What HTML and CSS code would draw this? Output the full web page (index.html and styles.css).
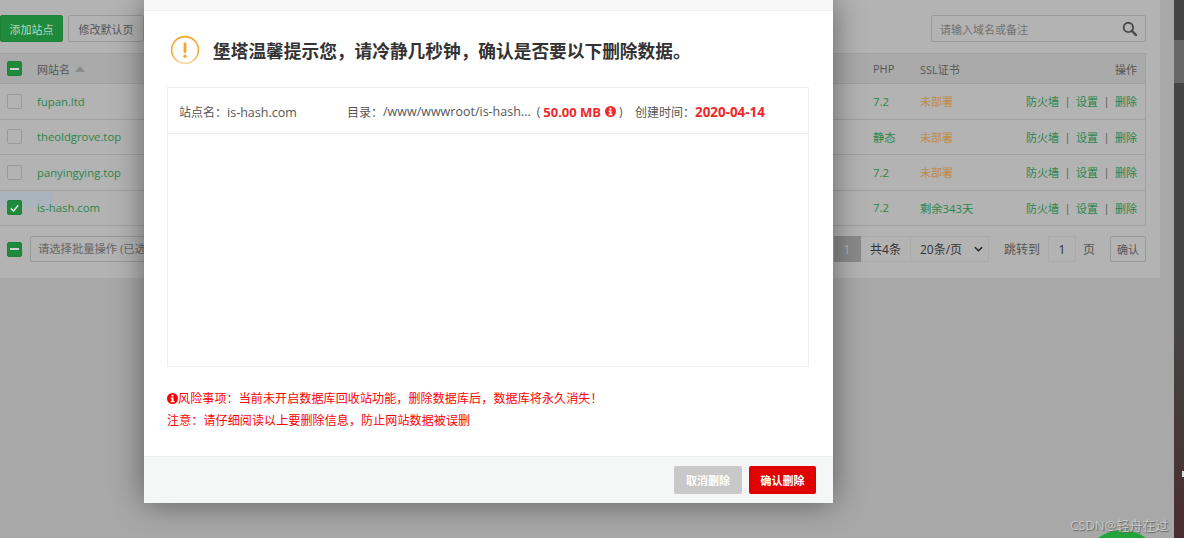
FILE: index.html
```html
<!DOCTYPE html>
<html lang="en">
<head>
  <meta charset="UTF-8" />
  <meta name="viewport" content="width=device-width, initial-scale=1.0" />
  <title>网站管理</title>
  <link rel="stylesheet" href="styles.css">
</head>
<body>
  <div class="page">
    <main class="panel">
      <div class="toolbar">
        <button class="btn btn-add">添加站点</button>
        <button class="btn btn-plain">修改默认页</button>
        <div class="search">
          <span class="search-text">请输入域名或备注</span>
          <svg class="search-icon" viewBox="0 0 16 16" width="15" height="15">
            <circle cx="6.8" cy="6.8" r="5" fill="none" stroke="#4a4a4a" stroke-width="2" />
            <path d="M10.5 10.5L15 15" stroke="#4a4a4a" stroke-width="2.6" stroke-linecap="round" />
          </svg>
        </div>
      </div>

      <div class="table">
        <div class="row row-head">
          <span class="check check-on"><span class="dash"></span></span>
          <span class="name-head">网站名<span class="sort"></span></span>
          <span>PHP</span>
          <span>SSL证书</span>
          <span class="actions">操作</span>
        </div>
        <div class="row">
          <span class="check"></span>
          <span class="link">fupan.ltd</span>
          <span class="link">7.2</span>
          <span class="warn">未部署</span>
          <span class="actions"><a>防火墙</a><i>|</i><a>设置</a><i>|</i><a>删除</a></span>
        </div>
        <div class="row">
          <span class="check"></span>
          <span class="link">theoldgrove.top</span>
          <span class="link">静态</span>
          <span class="warn">未部署</span>
          <span class="actions"><a>防火墙</a><i>|</i><a>设置</a><i>|</i><a>删除</a></span>
        </div>
        <div class="row">
          <span class="check"></span>
          <span class="link">panyingying.top</span>
          <span class="link">7.2</span>
          <span class="warn">未部署</span>
          <span class="actions"><a>防火墙</a><i>|</i><a>设置</a><i>|</i><a>删除</a></span>
        </div>
        <div class="row row-picked">
          <span class="check check-on">
            <svg viewBox="0 0 14 14" width="14" height="14"><path d="M3 7.4L6 10.2L11 4" fill="none" stroke="#e8e8e8" stroke-width="1.5" /></svg>
          </span>
          <span class="link">is-hash.com</span>
          <span class="link">7.2</span>
          <span class="link">剩余343天</span>
          <span class="actions"><a>防火墙</a><i>|</i><a>设置</a><i>|</i><a>删除</a></span>
        </div>
      </div>

      <div class="foot">
        <span class="check check-on"><span class="dash"></span></span>
        <div class="batch">请选择批量操作 (已选中1)</div>
        <div class="pager">
          <span class="pg pg-now">1</span>
          <span class="pg pg-total">共4条</span>
          <span class="pg pg-size">20条/页
            <svg viewBox="0 0 10 6" width="9" height="6"><path d="M1 1L5 5L9 1" fill="none" stroke="#222" stroke-width="1.6" /></svg>
          </span>
          <span class="pg-label pg-jump">跳转到</span>
          <span class="pg pg-input">1</span>
          <span class="pg-label">页</span>
          <button class="btn btn-go">确认</button>
        </div>
      </div>
    </main>
    <aside class="rail"><div class="thumb"></div><div class="rail-mark"></div></aside>
  </div>

  <div class="blob"></div>
  <div class="watermark">CSDN@轻舟在过</div>

  <section class="modal">
    <div class="modal-top"></div>
    <div class="modal-body">
      <h2 class="modal-title">
        <svg viewBox="0 0 30 30" width="30" height="30">
          <defs>
            <linearGradient id="ring" x1="0" y1="0" x2="0" y2="1">
              <stop offset="0" stop-color="#f5a623" />
              <stop offset="0.7" stop-color="#f7ae3c" />
              <stop offset="1" stop-color="#fbd79c" />
            </linearGradient>
          </defs>
          <circle cx="15" cy="15" r="13.4" fill="none" stroke="url(#ring)" stroke-width="1.6" />
          <rect x="13.6" y="7.4" width="2.8" height="10.6" rx="1" fill="#f5a623" />
          <circle cx="15" cy="21.2" r="1.7" fill="#f5a623" />
        </svg>
        <span>堡塔温馨提示您，请冷静几秒钟，确认是否要以下删除数据。</span>
      </h2>

      <div class="sites">
        <div class="site-row">
          <span class="site-name">站点名：<span class="latin">is-hash.com</span></span>
          <span class="site-dir">目录：<span class="latin">/www/wwwroot/is-hash...</span><span class="paren">(</span><b class="red">50.00 MB</b>
            <svg class="info" viewBox="0 0 12 12" width="11" height="11"><circle cx="6" cy="6" r="6" fill="#f02828" /><rect x="4.9" y="2" width="2.2" height="2" fill="#fff" /><path d="M4 5h3.1v3.6h1v1.4H4V8.6h1V6.3H4z" fill="#fff" /></svg><span class="paren paren-end">)</span></span>
          <span class="site-time">创建时间：<b class="red red-date">2020-04-14</b></span>
        </div>
      </div>

      <p class="risk">
        <svg class="info" viewBox="0 0 12 12" width="11" height="11"><circle cx="6" cy="6" r="6" fill="#f00" /><rect x="4.9" y="2" width="2.2" height="2" fill="#fff" /><path d="M4 5h3.1v3.6h1v1.4H4V8.6h1V6.3H4z" fill="#fff" /></svg>风险事项：当前未开启数据库回收站功能，删除数据库后，数据库将永久消失！
      </p>
      <p class="risk">注意：请仔细阅读以上要删除信息，防止网站数据被误删</p>
    </div>
    <div class="modal-foot">
      <button class="btn-modal btn-cancel">取消删除</button>
      <button class="btn-modal btn-confirm">确认删除</button>
    </div>
  </section>
</body>
</html>
```

FILE: styles.css
```css
* {
  box-sizing: border-box;
}

body {
  margin: 0;
  height: 538px;
  overflow: hidden;
  background-color: #a8a8a8;
  font-family: "Open Sans", "Noto Sans CJK SC", sans-serif;
  font-size: 11px;
  color: #555;
}

.page {
  display: flex;
  justify-content: space-between;
  height: 538px;
}

.panel {
  width: 1160px;
  height: 278px;
  padding: 15px 14px 16px 0;
  background-color: #b3b3b3;
}

.rail {
  width: 10px;
  background: linear-gradient(#444 0, #444 60%, #4a2c2e 100%);
  position: relative;
}

.thumb {
  height: 43px;
  margin-top: 40px;
  background-color: #666;
}

.rail-mark {
  position: absolute;
  right: 0;
  top: 471px;
  width: 2px;
  height: 6px;
  background-color: #ddd;
}

/* toolbar */
.toolbar {
  display: flex;
  align-items: center;
  gap: 5px;
  height: 27px;
}

.btn {
  height: 27px;
  border-radius: 2px;
  font-family: inherit;
  font-size: 11px;
  padding: 0;
}

.btn-add {
  width: 63px;
  border: 1px solid #1c8238;
  background-color: #1f8a3c;
  color: #b9d8c0;
}

.btn-plain {
  width: 76px;
  border: 1px solid #999;
  background-color: #b3b3b3;
  color: #555;
}

.search {
  display: flex;
  align-items: center;
  justify-content: space-between;
  margin-left: auto;
  width: 215px;
  height: 27px;
  padding: 0 8px;
  border: 1px solid #999;
  border-radius: 2px;
  color: #707070;
}

/* table */
.table {
  margin-top: 11px;
  border-top: 1px solid #a0a0a0;
  border-right: 1px solid #a0a0a0;
}

.row {
  display: grid;
  grid-template-columns: 37px 1fr 47px 100px 125px;
  align-items: center;
  height: 35.5px;
  border-bottom: 1px solid #a0a0a0;
  position: relative;
}

.row > .check {
  margin-left: 7px;
}

.row-head {
  height: 30px;
  background-color: #aaa;
}

.row-picked::before {
  content: "";
  position: absolute;
  left: 0;
  top: 1px;
  width: 53px;
  height: 15px;
  background-color: #a8b3bd;
}

.row-picked > * {
  position: relative;
}

.check {
  display: flex;
  align-items: center;
  justify-content: center;
  width: 15px;
  height: 15px;
  border: 1px solid #999;
  border-radius: 2px;
}

.check-on {
  border-color: #1c8238;
  background-color: #1f8a3c;
}

.dash {
  width: 9px;
  height: 2px;
  background-color: #d0d0d0;
}

.name-head {
  display: flex;
  align-items: center;
}

.sort {
  margin-left: 5px;
  border-left: 5px solid transparent;
  border-right: 5px solid transparent;
  border-bottom: 6px solid #8c8c8c;
}

.link {
  font-size: 11.3px;
  color: #2b8548;
}

.warn {
  color: #c08a45;
}

.actions {
  display: flex;
  justify-content: flex-end;
  padding-right: 8px;
  color: #2b8548;
}

.row-head .actions {
  color: #555;
}

.actions i {
  width: 17px;
  text-align: center;
  font-style: normal;
  color: #555;
}

/* footer */
.foot {
  display: flex;
  align-items: center;
  height: 26px;
  margin-top: 10px;
  padding-left: 7px;
}

.batch {
  width: 170px;
  height: 26px;
  margin-left: 8px;
  padding-left: 7px;
  border: 1px solid #999;
  border-radius: 2px;
  font-size: 11.3px;
  line-height: 24px;
  white-space: nowrap;
  color: #666;
}

.pager {
  display: flex;
  align-items: center;
  margin-left: auto;
  font-size: 12px;
}

.pg {
  display: flex;
  align-items: center;
  justify-content: center;
  height: 26px;
  color: #333;
  border: 1px solid #aaa;
  border-left: 0;
}

.pg-now {
  width: 27px;
  background-color: #8a8a8a;
  border-color: #8a8a8a;
  color: #b5b5b5;
}

.pg-total {
  width: 50px;
}

.pg-size {
  justify-content: space-between;
  width: 78px;
  padding: 0 5px 0 9px;
}

.pg-label {
  color: #555;
  margin: 0 7px;
}

.pg-jump {
  margin-left: 15px;
  margin-right: 8px;
}

.pg-input {
  width: 28px;
  border-left: 1px solid #aaa;
}

.btn-go {
  width: 36px;
  height: 26px;
  margin-left: 8px;
  border: 1px solid #999;
  background-color: #b3b3b3;
  color: #555;
}

/* over everything */
.blob {
  position: absolute;
  left: 1082px;
  top: 530px;
  width: 80px;
  height: 8px;
  overflow: hidden;
}

.blob::before {
  content: "";
  display: block;
  width: 80px;
  height: 80px;
  border-radius: 50%;
  background-color: #20a53a;
}

.watermark {
  position: absolute;
  left: 1070px;
  top: 515px;
  font-size: 13px;
  color: #c8c8c8;
  text-shadow: 1px 1px 1px #666;
}

.modal {
  position: absolute;
  left: 144px;
  top: 0;
  display: flex;
  flex-direction: column;
  width: 689px;
  height: 503px;
  background-color: #fff;
  box-shadow: 0 0 30px rgba(0, 0, 0, 0.45);
}

.modal-top {
  height: 11px;
  background-color: #f8f8f8;
  border-bottom: 1px solid #eee;
}

.modal-body {
  flex: 1;
  padding: 24px 24px 0 23px;
}

.modal-title {
  display: flex;
  align-items: center;
  gap: 13px;
  margin: 0 0 22px 3px;
  height: 30px;
  font-size: 17.7px;
  font-weight: 700;
  color: #333;
}

.sites {
  height: 280px;
  margin-bottom: 21px;
  border: 1px solid #eee;
}

.site-row {
  display: flex;
  align-items: center;
  height: 46px;
  padding: 2px 0 0 11px;
  border-bottom: 1px solid #eee;
  font-size: 12px;
  color: #555;
  white-space: nowrap;
}

.latin {
  font-size: 12.5px;
}

.site-name {
  width: 168px;
}

.site-dir {
  display: flex;
  align-items: center;
  width: 288px;
}

.paren {
  margin: 0 3px 0 6px;
}

.paren-end {
  margin: 0 0 0 3px;
}

.red {
  font-size: 13px;
  color: #f02828;
}

.red-date {
  font-size: 13.4px;
}

.info {
  flex: none;
  margin-left: 4px;
}

.risk {
  margin: 0;
  height: 22px;
  line-height: 22px;
  font-size: 12px;
  letter-spacing: 0.13px;
  color: #f00;
}

.risk .info {
  margin-left: 0;
  vertical-align: -1px;
}

.modal-foot {
  display: flex;
  justify-content: flex-end;
  align-items: center;
  gap: 7px;
  height: 47px;
  padding-right: 17px;
  background-color: #f5f7f7;
  border-top: 1px solid #eee;
}

.btn-modal {
  width: 68px;
  height: 28px;
  border: 0;
  border-radius: 2px;
  font-family: inherit;
  font-size: 11px;
  font-weight: 700;
  color: #fff;
}

.btn-cancel {
  background-color: #c8c8c8;
}

.btn-confirm {
  width: 67px;
  background-color: #e00000;
}
```
